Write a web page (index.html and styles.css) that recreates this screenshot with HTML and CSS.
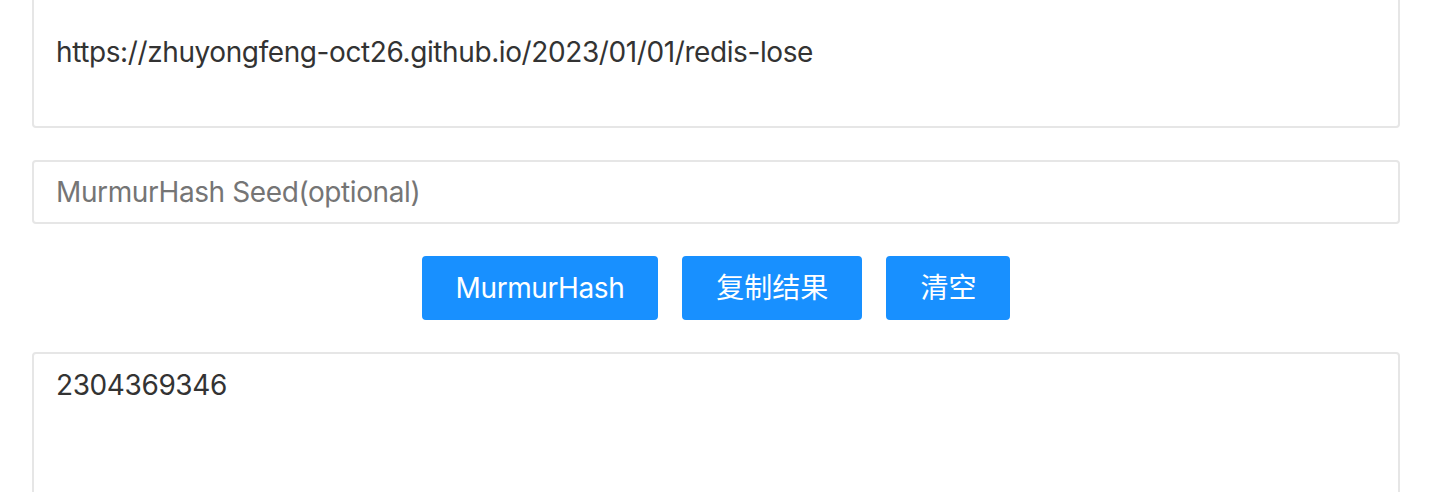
FILE: index.html
```html
<!DOCTYPE html>
<html lang="zh-CN">
<head>
<meta charset="utf-8">
<title>MurmurHash</title>
<link rel="stylesheet" href="styles.css">
</head>
<body>
<main class="page">
  <textarea class="field area area-source" readonly>

https://zhuyongfeng-oct26.github.io/2023/01/01/redis-lose</textarea>
  <input class="field input-seed" type="text" placeholder="MurmurHash Seed(optional)">
  <div class="actions">
    <button class="btn btn-latin" type="button">MurmurHash</button>
    <button class="btn" type="button">复制结果</button>
    <button class="btn" type="button">清空</button>
  </div>
  <textarea class="field area area-result" readonly>2304369346</textarea>
</main>
</body>
</html>
```

FILE: styles.css
```css
html, body {
  margin: 0;
  padding: 0;
  background: #fff;
  overflow: hidden;
}

body {
  font-family: Inter, "Noto Sans CJK SC", sans-serif;
  font-size: 28px;
  color: #333;
}

.page {
  display: flex;
  flex-direction: column;
  gap: 32px;
  padding: 0 40px 0 32px;
  margin-top: -26px;
}

.field {
  display: block;
  width: 100%;
  box-sizing: border-box;
  margin: 0;
  border: 2px solid #e6e6e6;
  border-radius: 4px;
  background: #fff;
  font-family: Inter, "Noto Sans CJK SC", sans-serif;
  font-size: 28px;
  line-height: 44px;
  letter-spacing: -0.4px;
  color: #333;
  padding: 8px 22px;
  outline: none;
}

.area {
  resize: none;
  overflow: hidden;
}

.area-source {
  height: 154px;
  padding-top: 10px;
}

.area-result {
  height: 200px;
  padding-top: 9px;
}

.input-seed {
  height: 64px;
}

.input-seed::placeholder {
  color: #757575;
  opacity: 1;
}

.actions {
  display: flex;
  justify-content: center;
  gap: 24px;
}

.btn {
  height: 64px;
  padding: 0 32px;
  border: 2px solid #1890ff;
  border-radius: 4px;
  background: #1890ff;
  color: #fff;
  font-family: Inter, "Noto Sans CJK SC", sans-serif;
  font-size: 28px;
  line-height: 1;
  cursor: pointer;
}

.btn-latin {
  letter-spacing: -0.4px;
}
```
